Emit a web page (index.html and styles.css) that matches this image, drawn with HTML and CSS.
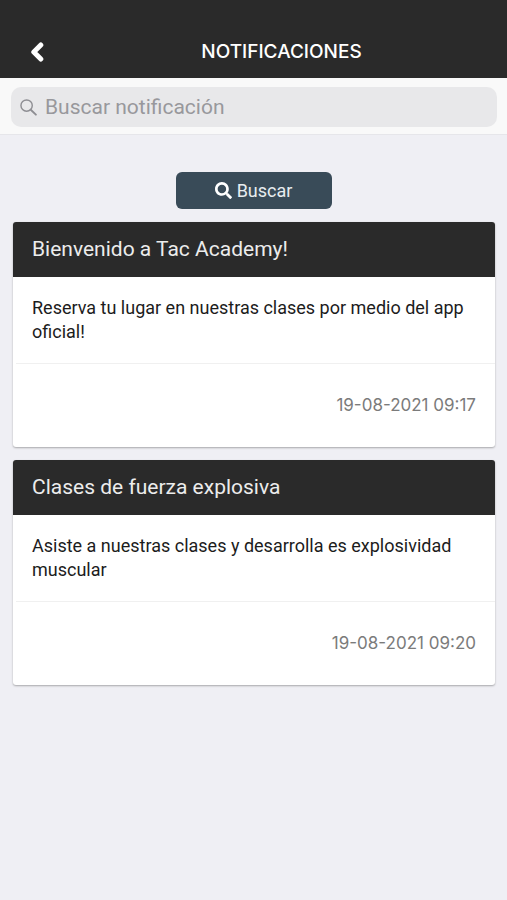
FILE: index.html
```html
<!DOCTYPE html>
<html lang="es">
<head>
    <meta charset="UTF-8">
    <meta name="viewport" content="width=device-width, initial-scale=1.0">
    <title>Notificaciones</title>

    <link rel="stylesheet" href="styles.css">
</head>
<body>
    <!-- Top bar -->
    <header class="navbar">
        <button type="button" class="back-button" aria-label="Volver">
            <svg class="back-icon" viewBox="0 0 14 20">
                <path d="M10.8 3 L3.8 10 L10.8 17" fill="none" stroke="#fff" stroke-width="5" stroke-linecap="round" stroke-linejoin="round"/>
            </svg>
        </button>
        <h1>NOTIFICACIONES</h1>
    </header>

    <form id="searchForm">
        <!-- Search box -->
        <div class="searchbar">
            <label class="search-field" for="searchText">
                <svg class="search-icon" viewBox="0 0 18 18" aria-hidden="true">
                    <circle cx="7" cy="7" r="6" fill="none" stroke="#8e8e93" stroke-width="1.5"/>
                    <path d="M11.400 11.400 L16.800 16.600" stroke="#8e8e93" stroke-width="2" stroke-linecap="round"/>
                </svg>
                <input type="text" id="searchText" placeholder="Buscar notificación" aria-label="Buscar notificación">
            </label>
        </div>

        <button type="submit" class="search-button">
            <svg class="button-icon" viewBox="0 0 512 512" aria-hidden="true">
                <path fill="#fff" d="M505 442.700 405.300 343c-4.500-4.500-10.600-7-17-7H372c27.600-35.300 44-79.700 44-128C416 93.100 322.900 0 208 0S0 93.100 0 208s93.100 208 208 208c48.300 0 92.700-16.400 128-44v16.300c0 6.400 2.500 12.500 7 17l99.700 99.700c9.400 9.400 24.600 9.400 33.900 0l28.300-28.300c9.400-9.400 9.400-24.600.1-34zM208 336c-70.700 0-128-57.200-128-128 0-70.700 57.200-128 128-128 70.700 0 128 57.200 128 128 0 70.700-57.200 128-128 128z"/>
            </svg>
            Buscar
        </button>
    </form>

    <!-- Notifications -->
    <main class="notifications">
        <article class="card">
            <h2 class="card-title">Bienvenido a Tac Academy!</h2>
            <p class="card-text">Reserva tu lugar en nuestras clases por medio del app oficial!</p>
            <div class="card-date">19-08-2021 09:17</div>
        </article>

        <article class="card">
            <h2 class="card-title">Clases de fuerza explosiva</h2>
            <p class="card-text">Asiste a nuestras clases y desarrolla es explosividad muscular</p>
            <div class="card-date">19-08-2021 09:20</div>
        </article>
    </main>

    <script>
        document.getElementById("searchForm").addEventListener("submit", function(event) {
            event.preventDefault();

            // Hide the cards that do not contain the searched text
            const text = document.getElementById("searchText").value.toLowerCase();
            document.querySelectorAll(".card").forEach(card => {
                card.hidden = !card.textContent.toLowerCase().includes(text);
            });
        });
    </script>
</body>
</html>
```

FILE: styles.css
```css
* {
    box-sizing: border-box;
}

body {
    font-family: Roboto, sans-serif;
    font-size: 18px;
    background: #efeff4;
    color: #1c1c1c;
    margin: 0;
}

.navbar {
    display: grid;
    grid-template-columns: 56px 1fr;
    align-items: center;
    background-color: #2a2a2a;
    color: white;
    padding-top: 25px;
    height: 78px;
}

.navbar h1 {
    margin: 0;
    font-family: Inter, sans-serif;
    font-size: 19px;
    font-weight: 500;
    text-align: center;
}

.back-button {
    display: flex;
    justify-content: flex-end;
    padding: 8px 12px;
    background: none;
    border: none;
    cursor: pointer;
}

.back-icon {
    width: 14px;
    height: 20px;
}

.searchbar {
    background-color: #f9f9f9;
    border-bottom: 1px solid #e6e6ea;
    padding: 9px 10px 7px 11px;
}

.search-field {
    display: flex;
    align-items: center;
    gap: 8px;
    height: 40px;
    padding: 0 9px;
    background-color: #e8e8ea;
    border-radius: 10px;
}

.search-icon {
    flex: none;
    width: 17px;
    height: 17px;
}

.search-field input {
    flex: 1;
    min-width: 0;
    padding: 0;
    border: none;
    outline: none;
    background: none;
    color: #212121;
    font-family: inherit;
    font-size: 21px;
}

.search-field input::placeholder {
    color: #98989c;
    opacity: 1;
}

.search-button {
    display: flex;
    align-items: center;
    justify-content: center;
    gap: 5px;
    width: 156px;
    height: 37px;
    margin: 37px auto 13px;
    padding: 0;
    background-color: #394b58;
    color: #e8edf0;
    border: none;
    border-radius: 6px;
    font-family: inherit;
    font-size: 18px;
    cursor: pointer;
}

.button-icon {
    width: 17px;
    height: 17px;
}

.notifications {
    padding: 0 12px 13px 13px;
}

.card {
    background-color: #fff;
    margin-bottom: 13px;
    border-radius: 3px;
    box-shadow: 0 1px 2px rgba(0, 0, 0, 0.3);
    overflow: hidden;
}

.card[hidden] {
    display: none;
}

.card-title {
    margin: 0;
    padding: 14px 19px 15px;
    background-color: #2a2a2a;
    color: #ececec;
    font-size: 21px;
    font-weight: 400;
    line-height: 26px;
}

.card-text {
    margin: 0;
    padding: 19px;
    line-height: 24px;
}

.card-date {
    margin-left: 3px;
    padding: 29px 19px 30px;
    border-top: 1px solid #f0f0f0;
    color: #7b7b7b;
    font-family: Inter, sans-serif;
    font-size: 17px;
    line-height: 24px;
    text-align: right;
}
```
